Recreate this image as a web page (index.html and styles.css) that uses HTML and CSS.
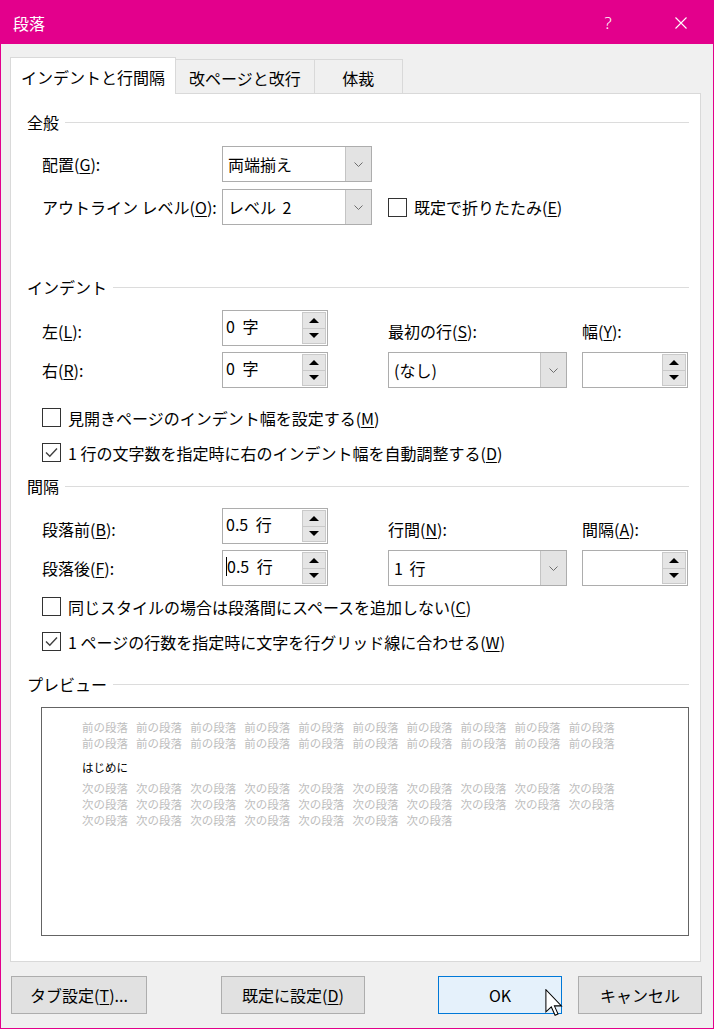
FILE: index.html
```html
<!DOCTYPE html>
<html lang="ja">
<head>
    <meta charset="utf-8">
    <title>段落</title>
    <link rel="stylesheet" href="styles.css">
</head>
<body>
<div class="window">
    <div class="titlebar">
        <span class="title">段落</span>
        <span class="help">?</span>
        <span class="close">
            <svg width="12" height="12" viewBox="0 0 12 12"><path d="M0.5 0.5 L11.5 11.5 M11.5 0.5 L0.5 11.5" stroke="#fff" stroke-width="1.1" fill="none"/></svg>
        </span>
    </div>

    <div class="tabs">
        <div class="tab active">インデントと行間隔</div>
        <div class="tab">改ページと改行</div>
        <div class="tab">体裁</div>
    </div>

    <div class="panel">
        <!-- 全般 -->
        <div class="group-title">全般</div>
        <div class="grid general">
            <label>配置(<u>G</u>):</label>
            <div class="combo short"><span class="value">両端揃え</span><span class="arrow"><svg width="9" height="5" viewBox="0 0 9 5"><path d="M0.5 0.5 L4.5 4.5 L8.5 0.5" stroke="#6d6d6d" fill="none"/></svg></span></div>
            <div></div>
            <label>アウトライン レベル(<u>O</u>):</label>
            <div class="combo short"><span class="value">レベル 2</span><span class="arrow"><svg width="9" height="5" viewBox="0 0 9 5"><path d="M0.5 0.5 L4.5 4.5 L8.5 0.5" stroke="#6d6d6d" fill="none"/></svg></span></div>
            <div class="check inline"><span class="box"></span>既定で折りたたみ(<u>E</u>)</div>
        </div>

        <!-- インデント -->
        <div class="group-title gap-big">インデント</div>
        <div class="grid fields">
            <label class="top-label">左(<u>L</u>):</label>
            <div class="spin"><span class="value">0 字</span><span class="buttons"><span class="up"></span><span class="down"></span></span></div>
            <label class="top-label">最初の行(<u>S</u>):</label>
            <label class="top-label">幅(<u>Y</u>):</label>
            <label>右(<u>R</u>):</label>
            <div class="spin"><span class="value">0 字</span><span class="buttons"><span class="up"></span><span class="down"></span></span></div>
            <div class="combo long"><span class="value">(なし)</span><span class="arrow"><svg width="9" height="5" viewBox="0 0 9 5"><path d="M0.5 0.5 L4.5 4.5 L8.5 0.5" stroke="#6d6d6d" fill="none"/></svg></span></div>
            <div class="spin"><span class="value"></span><span class="buttons"><span class="up"></span><span class="down"></span></span></div>
        </div>
        <div class="checks first">
            <div class="check"><span class="box"></span>見開きページのインデント幅を設定する(<u>M</u>)</div>
            <div class="check"><span class="box checked"><svg width="17" height="17" viewBox="0 0 17 17"><path d="M3 8.5 L6.8 12.3 L14 4.5" stroke="#404040" stroke-width="1.4" fill="none"/></svg></span>1 行の文字数を指定時に右のインデント幅を自動調整する(<u>D</u>)</div>
        </div>

        <!-- 間隔 -->
        <div class="group-title gap-small">間隔</div>
        <div class="grid fields">
            <label class="top-label">段落前(<u>B</u>):</label>
            <div class="spin"><span class="value">0.5 行</span><span class="buttons"><span class="up"></span><span class="down"></span></span></div>
            <label class="top-label">行間(<u>N</u>):</label>
            <label class="top-label">間隔(<u>A</u>):</label>
            <label>段落後(<u>F</u>):</label>
            <div class="spin"><span class="value"><span class="caret"></span>0.5 行</span><span class="buttons"><span class="up"></span><span class="down"></span></span></div>
            <div class="combo long"><span class="value">1 行</span><span class="arrow"><svg width="9" height="5" viewBox="0 0 9 5"><path d="M0.5 0.5 L4.5 4.5 L8.5 0.5" stroke="#6d6d6d" fill="none"/></svg></span></div>
            <div class="spin"><span class="value"></span><span class="buttons"><span class="up"></span><span class="down"></span></span></div>
        </div>
        <div class="checks second">
            <div class="check"><span class="box"></span>同じスタイルの場合は段落間にスペースを追加しない(<u>C</u>)</div>
            <div class="check"><span class="box checked"><svg width="17" height="17" viewBox="0 0 17 17"><path d="M3 8.5 L6.8 12.3 L14 4.5" stroke="#404040" stroke-width="1.4" fill="none"/></svg></span>1 ページの行数を指定時に文字を行グリッド線に合わせる(<u>W</u>)</div>
        </div>

        <!-- プレビュー -->
        <div class="group-title gap-preview">プレビュー</div>
        <div class="preview">
            <p class="sample prev">前の段落 前の段落 前の段落 前の段落 前の段落 前の段落 前の段落 前の段落 前の段落 前の段落 前の段落 前の段落 前の段落 前の段落 前の段落 前の段落 前の段落 前の段落 前の段落 前の段落</p>
            <p class="sample current">はじめに</p>
            <p class="sample next">次の段落 次の段落 次の段落 次の段落 次の段落 次の段落 次の段落 次の段落 次の段落 次の段落 次の段落 次の段落 次の段落 次の段落 次の段落 次の段落 次の段落 次の段落 次の段落 次の段落 次の段落 次の段落 次の段落 次の段落 次の段落 次の段落 次の段落</p>
        </div>
    </div>

    <div class="footer">
        <button class="btn tabs-btn">タブ設定(<u>T</u>)...</button>
        <button class="btn default-btn">既定に設定(<u>D</u>)</button>
        <button class="btn ok-btn">OK
            <svg class="cursor" width="18" height="27" viewBox="-0.5 -0.5 13 20"><path d="M0 0 L0 16.5 L4 12.8 L6.8 19 L9 18 L6.3 12 L11.5 12 Z" fill="#fff" stroke="#000" stroke-width="0.75" stroke-linejoin="miter"/></svg>
        </button>
        <button class="btn cancel-btn">キャンセル</button>
    </div>
</div>
</body>
</html>
```

FILE: styles.css
```css
* {
    box-sizing: border-box;
}

body {
    margin: 0;
    font-family: "Noto Sans CJK JP", "Noto Sans", sans-serif;
    font-size: 16px;
    color: #000;
    background-color: #f0f0f0;
}

u {
    text-decoration: underline;
    text-underline-offset: 2px;
    text-decoration-thickness: 1px;
}

.window {
    width: 714px;
    height: 1029px;
    border: 1px solid #e3008c;
    background-color: #f0f0f0;
    display: flex;
    flex-direction: column;
}

/* Title bar */
.titlebar {
    height: 43px;
    background-color: #e3008c;
    color: #fff;
    display: flex;
    align-items: center;
    padding-left: 12px;
}

.title {
    flex: 1;
    font-size: 16px;
}

.help {
    width: 46px;
    margin-right: 27px;
    text-align: center;
    font-family: "Noto Sans", sans-serif;
    font-weight: 300;
    font-size: 17px;
}

.close {
    width: 46px;
    margin-right: 9px;
    display: flex;
    justify-content: center;
}

/* Tabs */
.tabs {
    display: flex;
    align-items: flex-end;
    height: 36px;
    margin: 13px 0 0 9px;
}

.tab {
    height: 34px;
    padding: 3px 10px 0;
    min-width: 88px;
    text-align: center;
    line-height: 30px;
    background-color: #f0f0f0;
    border: 1px solid #d9d9d9;
    border-bottom: none;
    border-left: none;
}

.tab.active {
    height: 37px;
    line-height: 32px;
    margin-bottom: -1px;
    background-color: #fff;
    border-left: 1px solid #d9d9d9;
    position: relative;
    z-index: 1;
}

.tab + .tab {
    padding: 3px 13px 0;
}

/* Panel */
.panel {
    margin: 0 12px 0 9px;
    border: 1px solid #d9d9d9;
    background-color: #fff;
    padding: 18px 11px 25px 16px;
}

.group-title {
    display: flex;
    align-items: center;
    height: 20px;
    line-height: 20px;
}

.group-title::after {
    content: "";
    flex: 1;
    height: 1px;
    margin-left: 6px;
    background-color: #dcdcdc;
}

.gap-big {
    margin-top: 52px;
}

.gap-small {
    margin-top: 6px;
}

.gap-preview {
    margin-top: 15px;
}

.grid {
    display: grid;
    margin-left: 15px;
    align-items: center;
}

.general {
    margin-top: 14px;
    grid-template-columns: 180px 150px auto;
    grid-auto-rows: 36px;
    row-gap: 7px;
}

.fields {
    margin-top: 13px;
    grid-template-columns: 180px 166px 194px 106px;
    grid-auto-rows: 36px;
    row-gap: 6px;
}

.gap-small + .fields {
    margin-top: 12px;
}

.top-label {
    padding-top: 6px;
}

/* Combo box */
.combo {
    display: flex;
    height: 36px;
    border: 1px solid #adadad;
    background-color: #fff;
}

.combo.short {
    width: 150px;
}

.combo.long {
    width: 179px;
}

.combo .value {
    flex: 1;
    padding-left: 5px;
    line-height: 34px;
    word-spacing: 3px;
}

.combo .arrow {
    width: 26px;
    background-color: #e3e3e3;
    border-left: 1px solid #c4c4c4;
    display: flex;
    align-items: center;
    justify-content: center;
}

/* Spin box */
.spin {
    display: flex;
    width: 106px;
    height: 36px;
    border: 1px solid #adadad;
    background-color: #fff;
}

.spin .value {
    flex: 1;
    padding-left: 3px;
    height: 30px;
    display: flex;
    align-items: center;
    white-space: pre;
    word-spacing: 4px;
}

.caret {
    display: inline-block;
    width: 1px;
    height: 19px;
    background-color: #000;
}

.spin .buttons {
    width: 24px;
    margin: 1px 1px 1px 0;
    display: flex;
    flex-direction: column;
}

.spin .up,
.spin .down {
    flex: 1;
    background-color: #e5e5e5;
    border: 1px solid #c9c9c9;
    display: flex;
    align-items: center;
    justify-content: center;
}

.spin .down {
    border-top: none;
}

.spin .up::before,
.spin .down::before {
    content: "";
    border-left: 5px solid transparent;
    border-right: 5px solid transparent;
}

.spin .up::before {
    border-bottom: 5px solid #000;
}

.spin .down::before {
    border-top: 5px solid #000;
}

/* Check boxes */
.checks {
    margin-left: 15px;
}

.checks.first {
    margin-top: 12px;
}

.checks.second {
    margin-top: 3px;
}

.check {
    display: flex;
    align-items: center;
    height: 35px;
}

.check.inline {
    height: auto;
    margin-left: 16px;
}

.box {
    width: 19px;
    height: 19px;
    border: 1px solid #333;
    background-color: #fff;
    margin-right: 7px;
    display: flex;
    align-items: center;
    justify-content: center;
}

/* Preview */
.preview {
    margin: 13px 0 0 14px;
    height: 229px;
    border: 1px solid #646464;
    padding: 11px 0 0 40px;
}

.sample {
    margin: 0;
    width: 560px;
    font-size: 11.5px;
    line-height: 16px;
    word-spacing: 5.5px;
    word-break: keep-all;
}

.prev,
.next {
    color: #bdbdbd;
}

.current {
    margin-top: 8px;
}

.next {
    margin-top: 5px;
}

/* Footer buttons */
.footer {
    display: flex;
    margin-top: 14px;
    padding: 0 11px 0 10px;
}

.btn {
    height: 38px;
    font-family: inherit;
    font-size: 16px;
    color: #000;
    background-color: #e1e1e1;
    border: 1px solid #adadad;
    padding: 0;
}

.tabs-btn {
    width: 136px;
}

.default-btn {
    width: 144px;
    margin-left: 74px;
}

.ok-btn {
    width: 124px;
    margin-left: auto;
    background-color: #e5f1fb;
    border-color: #0078d7;
    position: relative;
}

.cancel-btn {
    width: 124px;
    margin-left: 16px;
}

.cursor {
    position: absolute;
    left: 106px;
    top: 12px;
}
```
